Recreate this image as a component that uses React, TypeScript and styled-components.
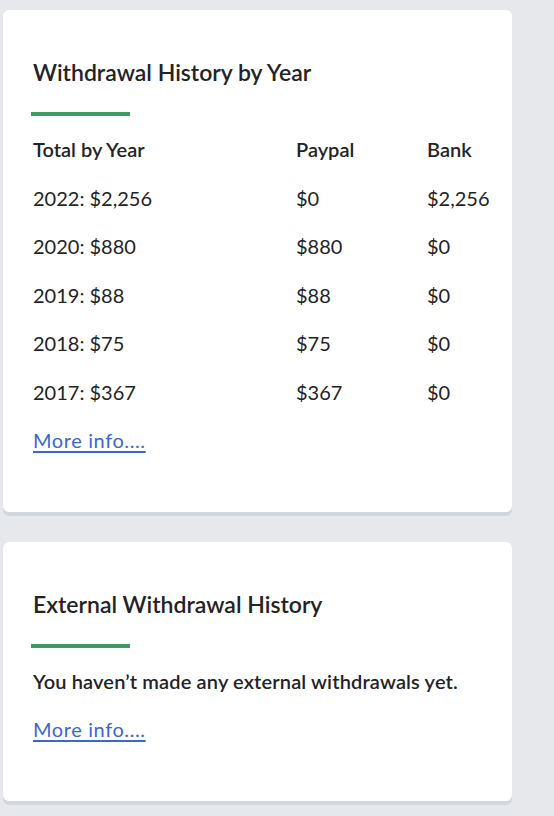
import React from 'react';
import styled, { createGlobalStyle } from 'styled-components';

const GlobalStyle = createGlobalStyle`
  html, body {
    margin: 0;
    padding: 0;
    background: #e6e8eb;
  }
  body {
    font-family: Lato, "Open Sans", Arial, sans-serif;
    color: #222327;
    -webkit-font-smoothing: antialiased;
  }
`;

const Page = styled.div`
  display: flex;
  flex-direction: column;
  gap: 30px;
  padding: 10px 42px 20px 3px;
`;

const Card = styled.section`
  background: #ffffff;
  border-radius: 6px;
  box-shadow: 0 4px 0 #d2d7dd;
  padding: 47px 29px 47px 30px;
`;

const Title = styled.h2`
  margin: 0;
  font-size: 23px;
  line-height: 30px;
  font-weight: 600;
`;

const Accent = styled.div`
  width: 99px;
  height: 4px;
  margin: 25px 0 9px -2px;
  background: #3f9a60;
`;

const Table = styled.div`
  display: grid;
  grid-template-columns: 263px 131px 1fr;
`;

const Cell = styled.div<{ $head?: boolean }>`
  height: 48.5px;
  display: flex;
  align-items: center;
  font-size: 20px;
  font-weight: ${(p) => (p.$head ? 600 : 400)};
`;

const Note = styled.p`
  margin: 0;
  height: 48.5px;
  display: flex;
  align-items: center;
  font-size: 20px;
  font-weight: 600;
  letter-spacing: 0.15px;
`;

const MoreLink = styled.a`
  display: inline-flex;
  align-items: center;
  height: 48.5px;
  font-size: 20px;
  letter-spacing: 0.6px;
  color: #3b67cf;
  text-decoration: underline;
  text-underline-offset: 3px;
  cursor: pointer;
`;

const rows = [
  ['2022: $2,256', '$0', '$2,256'],
  ['2020: $880', '$880', '$0'],
  ['2019: $88', '$88', '$0'],
  ['2018: $75', '$75', '$0'],
  ['2017: $367', '$367', '$0'],
];

const App = () => {
  return (
    <>
      <GlobalStyle />
      <Page>
        <Card>
          <Title>Withdrawal History by Year</Title>
          <Accent />
          <Table>
            <Cell $head>Total by Year</Cell>
            <Cell $head>Paypal</Cell>
            <Cell $head>Bank</Cell>
            {rows.map((r) =>
              r.map((v, i) => <Cell key={r[0] + i}>{v}</Cell>)
            )}
          </Table>
          <MoreLink>More info....</MoreLink>
        </Card>
        <Card>
          <Title>External Withdrawal History</Title>
          <Accent />
          <Note>You haven’t made any external withdrawals yet.</Note>
          <MoreLink>More info....</MoreLink>
        </Card>
      </Page>
    </>
  );
};

export default App;
